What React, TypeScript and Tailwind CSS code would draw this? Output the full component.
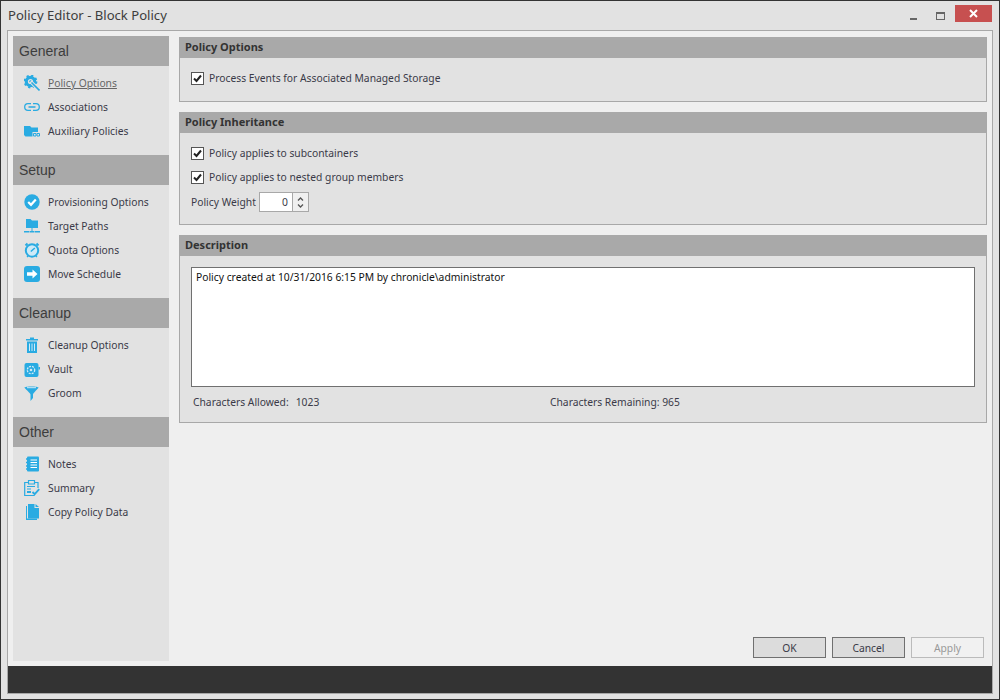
import type { ReactNode } from "react";

const blue = "#29abe2";
const pale = "#cfeaf7";

function Icon({ children }: { children: ReactNode }) {
  return (
    <svg width="16" height="16" viewBox="0 0 16 16" className="shrink-0" fill={blue}>
      {children}
    </svg>
  );
}

const navGroups: { title: string; items: { label: string; icon: ReactNode; active?: boolean }[] }[] = [
  {
    title: "General",
    items: [
      {
        label: "Policy Options",
        active: true,
        icon: (
          <Icon>
            <circle cx="6.500" cy="6.500" r="4.200" fill="none" stroke={blue} strokeWidth="3.200" />
            <circle cx="6.500" cy="6.500" r="6" fill="none" stroke={blue} strokeWidth="1.800" strokeDasharray="2.200 2.500" />
            <circle cx="6.500" cy="6.500" r="1.200" />
            <path d="M6.500 6.500l9 9" stroke="#e2e2e2" strokeWidth="3.400" />
            <path d="M7.500 7.500l8 8" stroke={blue} strokeWidth="1.600" />
          </Icon>
        ),
      },
      {
        label: "Associations",
        icon: (
          <Icon>
            <path d="M7 4.700H4a3.300 3.300 0 0 0 0 6.600h3M9 4.700h3a3.300 3.300 0 0 1 0 6.600H9M4.500 8h7" fill="none" stroke={blue} strokeWidth="1.300" />
          </Icon>
        ),
      },
      {
        label: "Auxiliary Policies",
        icon: (
          <Icon>
            <path d="M0 3h6l1.500 1.500H14V9H8.500v4.500H1.500L0 12z" />
            <path d="M9.500 10.500h2.500v2.500H9.500zM13 10.500h2.500v2.500H13z" fill="none" stroke={blue} />
          </Icon>
        ),
      },
    ],
  },
  {
    title: "Setup",
    items: [
      {
        label: "Provisioning Options",
        icon: (
          <Icon>
            <circle cx="8" cy="8" r="7.700" />
            <path d="M4.200 8l2.800 2.800 4.800-5.300" fill="none" stroke="#fff" strokeWidth="2.200" />
          </Icon>
        ),
      },
      {
        label: "Target Paths",
        icon: (
          <Icon>
            <path d="M2 1h4.500L8 2.500h6V10H2z" />
            <path d="M7.500 10h1v3h-1zM0 13h5.500v1.500H0zM6 13h4v1.500H6zM10.500 13H16v1.500h-5.500z" />
          </Icon>
        ),
      },
      {
        label: "Quota Options",
        icon: (
          <Icon>
            <circle cx="8" cy="8.500" r="6.200" fill={pale} stroke={blue} strokeWidth="2" />
            <path d="M1.500 3.500l2-2M14.500 3.500l-2-2" stroke={blue} strokeWidth="2" />
            <path d="M6.800 9.500l4-3.500" stroke={blue} strokeWidth="1.500" />
            <path d="M3 15l1.500-1.500M13 15l-1.500-1.500" stroke={blue} strokeWidth="1.300" />
          </Icon>
        ),
      },
      {
        label: "Move Schedule",
        icon: (
          <Icon>
            <rect x="0" y="0" width="16" height="16" rx="3" />
            <path d="M3 6.300h5.500V3.500L13.500 8l-5 4.500V9.700H3z" fill="#fff" />
          </Icon>
        ),
      },
    ],
  },
  {
    title: "Cleanup",
    items: [
      {
        label: "Cleanup Options",
        icon: (
          <Icon>
            <path d="M6 .5h4V2h4v1.500H2V2h4z" />
            <path d="M3 4.500h10V16H3z" />
            <path d="M5.500 6.500V14M8 6.500V14M10.500 6.500V14" stroke={pale} strokeWidth="1" />
          </Icon>
        ),
      },
      {
        label: "Vault",
        icon: (
          <Icon>
            <rect x="0.500" y="2" width="14" height="14" rx="2" />
            <rect x="14.500" y="6" width="1.500" height="2.500" />
            <circle cx="7" cy="9" r="3.700" fill="none" stroke={pale} strokeWidth="1.300" strokeDasharray="2 1" />
            <circle cx="7" cy="9" r="1.300" fill={pale} />
          </Icon>
        ),
      },
      {
        label: "Groom",
        icon: (
          <Icon>
            <path d="M.5 2.500C.5 1 14.500 1 14.500 2.500 14.500 3.500 9 8 9 9.500V13l-2.500 3V9.500C6.500 8 .5 3.500.5 2.500z" />
            <path d="M3 2.700h9" stroke={pale} strokeWidth="1" />
          </Icon>
        ),
      },
    ],
  },
  {
    title: "Other",
    items: [
      {
        label: "Notes",
        icon: (
          <Icon>
            <rect x="3" y="0.500" width="12" height="15" rx="1" />
            <path d="M6.500 4H13M6.500 6.500H13M6.500 9H13M6.500 11.500H13" stroke="#fff" strokeWidth="1" />
            <path d="M2 3h2.500M2 6.500h2.500M2 10h2.500M2 13h2.500" stroke={blue} strokeWidth="1.500" />
          </Icon>
        ),
      },
      {
        label: "Summary",
        icon: (
          <Icon>
            <path d="M4 2.500H.7v13h10M11 2.500h3V8" fill="none" stroke={blue} strokeWidth="1.200" />
            <path d="M4.500 .5h6v3.500h-6zM3 6.500h8M3 9h4" fill="none" stroke={blue} strokeWidth="1.200" />
            <rect x="3" y="11" width="4" height="2" />
            <path d="M8.500 12l2.200 2.200 4.500-5" fill="none" stroke={blue} strokeWidth="1.800" />
          </Icon>
        ),
      },
      {
        label: "Copy Policy Data",
        icon: (
          <Icon>
            <path d="M2 2h1v12.500h10V16H2z" />
            <path d="M4 0h6.500v4H15v10.500H4z" />
            <path d="M11.500 0L15 3h-3.500z" />
          </Icon>
        ),
      },
    ],
  },
];

function Checkbox({ label }: { label: string }) {
  return (
    <div className="flex h-[24px] items-center gap-[5px]">
      <span className="flex h-[13px] w-[13px] items-center justify-center border border-[#555] bg-white">
        <svg width="11" height="11" viewBox="0 0 11 11">
          <path d="M2 5.500l2.500 2.500L9 2.500" fill="none" stroke="#222" strokeWidth="2" />
        </svg>
      </span>
      <span className="pt-[1px]">{label}</span>
    </div>
  );
}

function Panel({ title, className, children }: { title: string; className: string; children: ReactNode }) {
  return (
    <section className={`border border-t-0 border-[#a8a8a8] bg-[#e2e2e2] ${className}`}>
      <h2 className="flex h-[21px] items-center bg-[#a9a9a9] px-[5px] text-[11px] font-bold text-[#333]">{title}</h2>
      {children}
    </section>
  );
}

export default function App() {
  return (
    <div className="flex h-[700px] w-[1000px] flex-col overflow-hidden border border-[#333] bg-[#e2e2e2] font-['Noto_Sans',sans-serif] text-[10.3px] text-[#3a3a48]">
      <header className="flex h-[29px] shrink-0 items-center pl-[7px] text-[13.1px] text-[#3d3d3d]">
        <span className="flex-1">Policy Editor - Block Policy</span>
        <span className="mt-[6px] h-[2px] w-[7px] bg-[#666]" />
        <span className="ml-[19px] h-[8px] w-[9px] border border-t-2 border-[#666]" />
        <span className="mb-[4px] ml-[10px] mr-[7px] flex h-[17px] w-[37px] items-center justify-center bg-[#c75050]">
          <svg width="9" height="9" viewBox="0 0 9 9">
            <path d="M1 1l7 7M8 1l-7 7" stroke="#fff" strokeWidth="2" />
          </svg>
        </span>
      </header>

      <div className="mx-[6px] flex min-h-0 flex-1 flex-col border border-b-0 border-[#a8a8a8] bg-[#efefef]">
        <div className="flex min-h-0 flex-1">
          <aside className="my-[5px] ml-[5px] w-[156px] shrink-0 bg-[#e2e2e2]">
            {navGroups.map((group) => (
              <div key={group.title} className="pb-[12px]">
                <h3 className="flex h-[30px] items-center bg-[#a9a9a9] pl-[6px] font-['Liberation_Sans',sans-serif] text-[14px] text-[#3d3d3d]">
                  {group.title}
                </h3>
                <ul className="pt-[5px]">
                  {group.items.map((item) => (
                    <li key={item.label} className="flex h-[24px] items-center gap-[8px] pl-[11px]">
                      {item.icon}
                      <span className={item.active ? "pt-[1px] text-[#666] underline" : "pt-[1px]"}>{item.label}</span>
                    </li>
                  ))}
                </ul>
              </div>
            ))}
          </aside>

          <main className="flex min-w-0 flex-1 flex-col pl-[10px] pr-[5px] pt-[6px]">
            <Panel title="Policy Options" className="h-[65px]">
              <div className="px-[11px] pt-[8px]">
                <Checkbox label="Process Events for Associated Managed Storage" />
              </div>
            </Panel>

            <Panel title="Policy Inheritance" className="mt-[10px] h-[113px]">
              <div className="px-[11px] pt-[8px]">
                <Checkbox label="Policy applies to subcontainers" />
                <Checkbox label="Policy applies to nested group members" />
                <div className="flex items-center gap-[3px] pt-[3px]">
                  <span className="pt-[1px]">Policy Weight</span>
                  <div className="flex h-[20px] w-[50px] border border-[#a8a8a8] bg-white">
                    <span className="flex-1 pr-[4px] text-right leading-[19px]">0</span>
                    <span className="flex w-[16px] flex-col items-center justify-center gap-[3px] border-l border-[#a8a8a8] bg-[#f0f0f0]">
                      <svg width="7" height="4" viewBox="0 0 7 4">
                        <path d="M1 3.500l2.500-2.500L6 3.500" fill="none" stroke="#555" strokeWidth="1.300" />
                      </svg>
                      <svg width="7" height="4" viewBox="0 0 7 4">
                        <path d="M1 .5l2.500 2.500L6 .5" fill="none" stroke="#555" strokeWidth="1.300" />
                      </svg>
                    </span>
                  </div>
                </div>
              </div>
            </Panel>

            <Panel title="Description" className="mt-[10px] h-[188px]">
              <div className="px-[11px] pt-[11px]">
                <div className="h-[120px] border border-[#707070] bg-white px-[4px] py-[2px] text-[#111]">
                  Policy created at 10/31/2016 6:15 PM by chronicle\administrator
                </div>
                <div className="flex pl-[2px] pt-[8px]">
                  <span className="flex w-[357px] gap-[7px]">
                    <span>Characters Allowed:</span>
                    <span>1023</span>
                  </span>
                  <span>Characters Remaining: 965</span>
                </div>
              </div>
            </Panel>

            <div className="mt-auto flex justify-end gap-[6px] pb-[8px] pr-[3px]">
              <button type="button" className="h-[21px] w-[73px] border border-[#707070] bg-[#dcdcdc] pt-[2px]">OK</button>
              <button type="button" className="h-[21px] w-[73px] border border-[#707070] bg-[#dcdcdc] pt-[2px]">Cancel</button>
              <button type="button" className="h-[21px] w-[73px] border border-[#bbb] bg-[#f1f1f1] pt-[2px] text-[#999]">Apply</button>
            </div>
          </main>
        </div>
        <div className="h-[27px] shrink-0 bg-[#333]" />
      </div>
      <div className="mx-[6px] h-[6px] shrink-0 border-t border-[#a8a8a8]" />
    </div>
  );
}
